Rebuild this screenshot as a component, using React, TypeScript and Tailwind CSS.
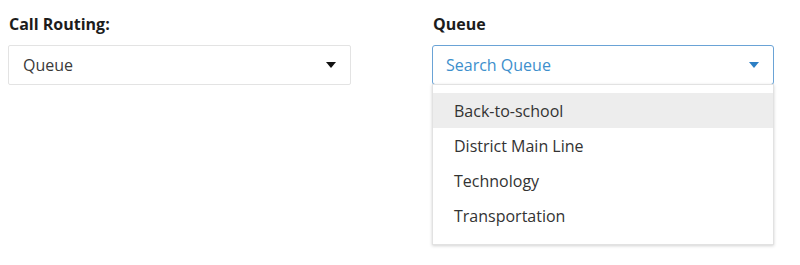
import React from "react";

const Caret = ({ color }: { color: string }) => (
  <svg width="10" height="6" viewBox="0 0 10 6" className="shrink-0">
    <path d="M0 0 L10 0 L5 6 Z" fill={color} />
  </svg>
);

export default function App() {
  const items = ["Back-to-school", "District Main Line", "Technology", "Transportation"];
  return (
    <div className="w-[800px] h-[265px] bg-white flex pl-[8px] pt-[14px]" style={{ fontFamily: "'Open Sans', Lato, sans-serif" }}>
      <div className="w-[343px] flex flex-col">
        <div className="text-[16px] font-bold text-[#1c1c1c] leading-[20px] pl-[1px]">Call Routing:</div>
        <div className="mt-[11px] h-[40px] border border-[#e3e3e3] rounded-[2px] flex items-center justify-between pl-[14px] pr-[14px]">
          <span className="text-[16px] text-[#3a3a3a]">Queue</span>
          <Caret color="#111" />
        </div>
      </div>
      <div className="ml-[81px] w-[342px] flex flex-col">
        <div className="text-[16px] font-bold text-[#1c1c1c] leading-[20px] pl-[1px]">Queue</div>
        <div className="relative mt-[11px]">
          <div className="h-[40px] border border-[#6aa3d6] rounded-[3px] flex items-center justify-between pl-[13px] pr-[14px]">
            <span className="text-[16px] text-[#3d8fcc]">Search Queue</span>
            <Caret color="#2d7fc4" />
          </div>
          <div className="absolute left-0 top-[39px] w-[342px] bg-white border border-[#e2e2e2] shadow-[0_1px_3px_rgba(0,0,0,0.18)] pt-[8px] pb-[11px]">
            {items.map((t, i) => (
              <div key={t} className={`h-[35px] flex items-center pl-[21px] text-[16px] text-[#333] ${i === 0 ? "bg-[#ededed]" : ""}`}>
                {t}
              </div>
            ))}
          </div>
        </div>
      </div>
    </div>
  );
}
